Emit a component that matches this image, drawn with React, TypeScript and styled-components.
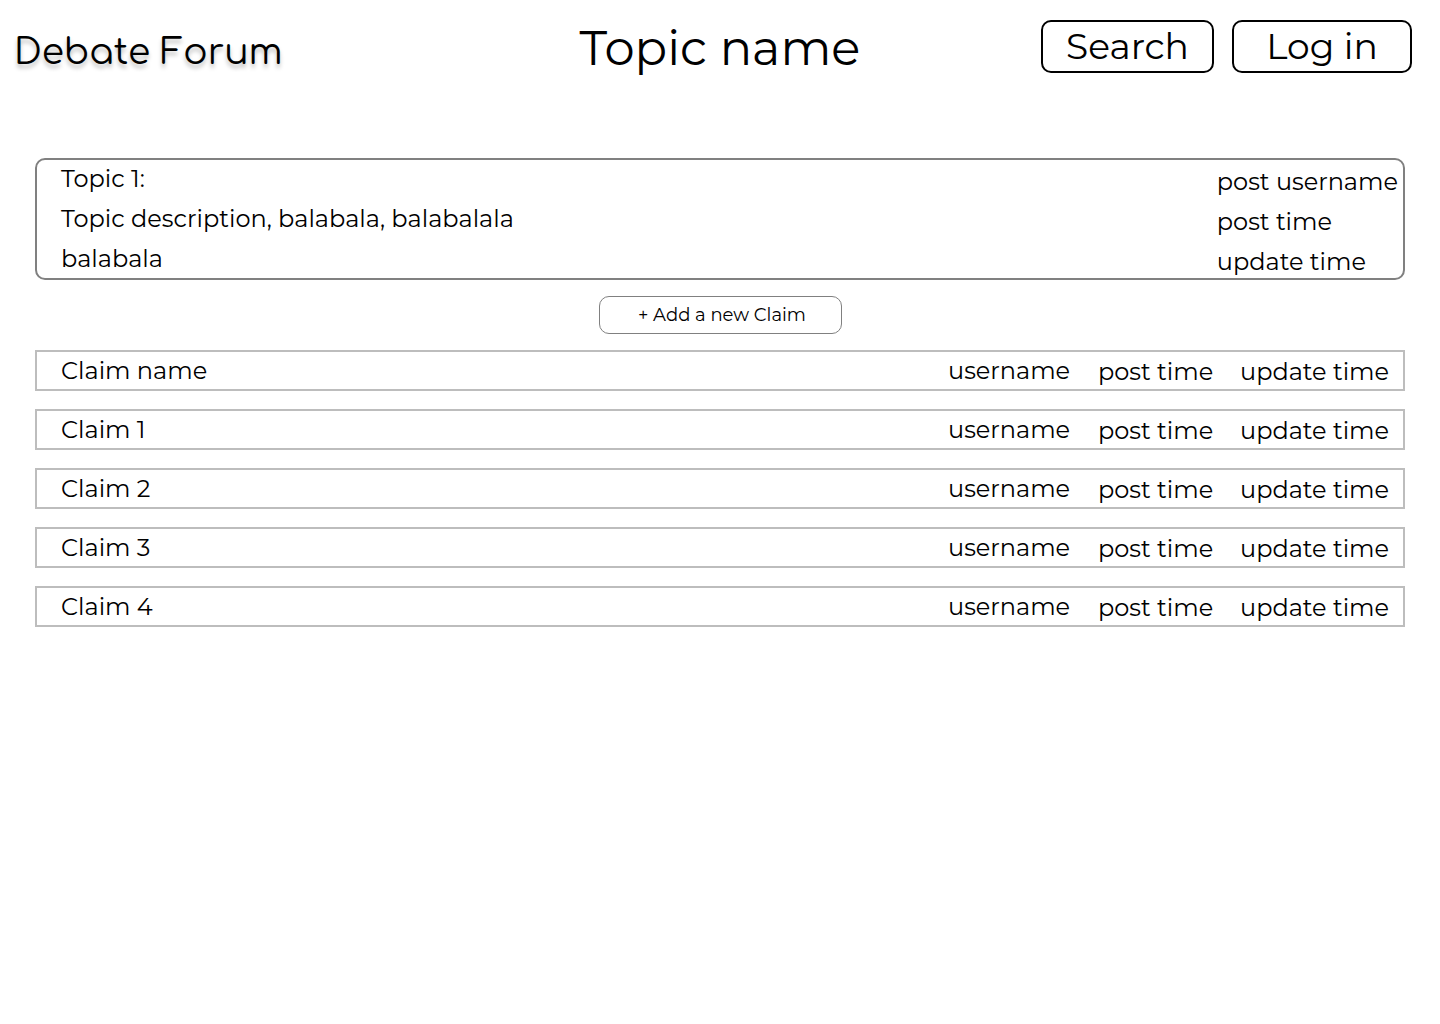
import React from "react";
import styled, { createGlobalStyle } from "styled-components";

const GlobalStyle = createGlobalStyle`
  *, *::before, *::after { box-sizing: border-box; }
  body {
    margin: 0;
    background: #fff;
    color: #000;
    font-family: Montserrat, Inter, "Open Sans", sans-serif;
    font-size: 24px;
    line-height: 38px;
  }
`;

const Header = styled.header`
  display: grid;
  grid-template-columns: 1fr auto 1fr;
  align-items: start;
  gap: 16px;
  padding: 20px 14px 0;
`;

const Brand = styled.a`
  justify-self: start;
  padding-top: 8px;
  color: #000;
  font-family: Comfortaa, Inter, sans-serif;
  font-size: 36px;
  font-weight: 400;
  line-height: 48px;
  text-decoration: none;
  text-shadow: 0 4px 4px rgba(0, 0, 0, 0.25);
  white-space: nowrap;
`;

const Title = styled.h1`
  margin: 0;
  font-size: 48px;
  font-weight: 400;
  line-height: 56px;
  white-space: nowrap;
`;

const Actions = styled.nav`
  display: flex;
  justify-content: flex-end;
  gap: 18px;
  padding-right: 14px;
`;

const HeaderButton = styled.button<{ $width: number }>`
  width: ${({ $width }) => $width}px;
  padding: 0;
  border: 2px solid #000;
  border-radius: 10px;
  background: #fff;
  color: #000;
  font: inherit;
  font-size: 36px;
  line-height: 49px;
  cursor: pointer;
`;

const Main = styled.main`
  display: flex;
  flex-direction: column;
  gap: 16px;
  padding: 82px 35px 24px;
`;

const TopicCard = styled.article`
  display: flex;
  justify-content: space-between;
  align-items: flex-start;
  padding: 0 5px 0 24px;
  border: 2px solid #808080;
  border-radius: 10px;
`;

const TopicText = styled.div`
  display: flex;
  flex-direction: column;
  gap: 2px;
`;

const TopicMeta = styled(TopicText)`
  margin: 3px 0 -3px;
`;

const TopicLine = styled.p`
  margin: 0;
`;

const AddButton = styled.button`
  align-self: center;
  width: 243px;
  padding: 0 0 0 4px;
  border: 1px solid #808080;
  border-radius: 10px;
  background: #fff;
  color: #000;
  font: inherit;
  font-size: 18px;
  line-height: 36px;
  cursor: pointer;
`;

const ClaimTable = styled.table`
  display: block;
  width: 100%;
`;

const ClaimBody = styled.tbody`
  display: flex;
  flex-direction: column;
  gap: 18px;
`;

const ClaimRow = styled.tr`
  display: grid;
  grid-template-columns: 1fr 150px 142px 163px;
  padding-left: 24px;
  border: 2px solid #bdbdbd;
  line-height: 37px;
`;

const Cell = styled.td`
  padding: 0;
  white-space: nowrap;
`;

const TimeCell = styled(Cell)`
  margin: 1px 0 -1px;
`;

const claims = ["Claim name", "Claim 1", "Claim 2", "Claim 3", "Claim 4"];

export default function App() {
  return (
    <>
      <GlobalStyle />
      <Header>
        <Brand href="#">Debate Forum</Brand>
        <Title>Topic name</Title>
        <Actions>
          <HeaderButton type="button" $width={173}>Search</HeaderButton>
          <HeaderButton type="button" $width={180}>Log in</HeaderButton>
        </Actions>
      </Header>
      <Main>
        <TopicCard>
          <TopicText>
            <TopicLine>Topic 1:</TopicLine>
            <TopicLine>Topic description, balabala, balabalala</TopicLine>
            <TopicLine>balabala</TopicLine>
          </TopicText>
          <TopicMeta>
            <TopicLine>post username</TopicLine>
            <TopicLine>post time</TopicLine>
            <TopicLine>update time</TopicLine>
          </TopicMeta>
        </TopicCard>
        <AddButton type="button">+ Add a new Claim</AddButton>
        <ClaimTable>
          <ClaimBody>
            {claims.map((claim) => (
              <ClaimRow key={claim}>
                <Cell>{claim}</Cell>
                <Cell>username</Cell>
                <TimeCell>post time</TimeCell>
                <TimeCell>update time</TimeCell>
              </ClaimRow>
            ))}
          </ClaimBody>
        </ClaimTable>
      </Main>
    </>
  );
}
